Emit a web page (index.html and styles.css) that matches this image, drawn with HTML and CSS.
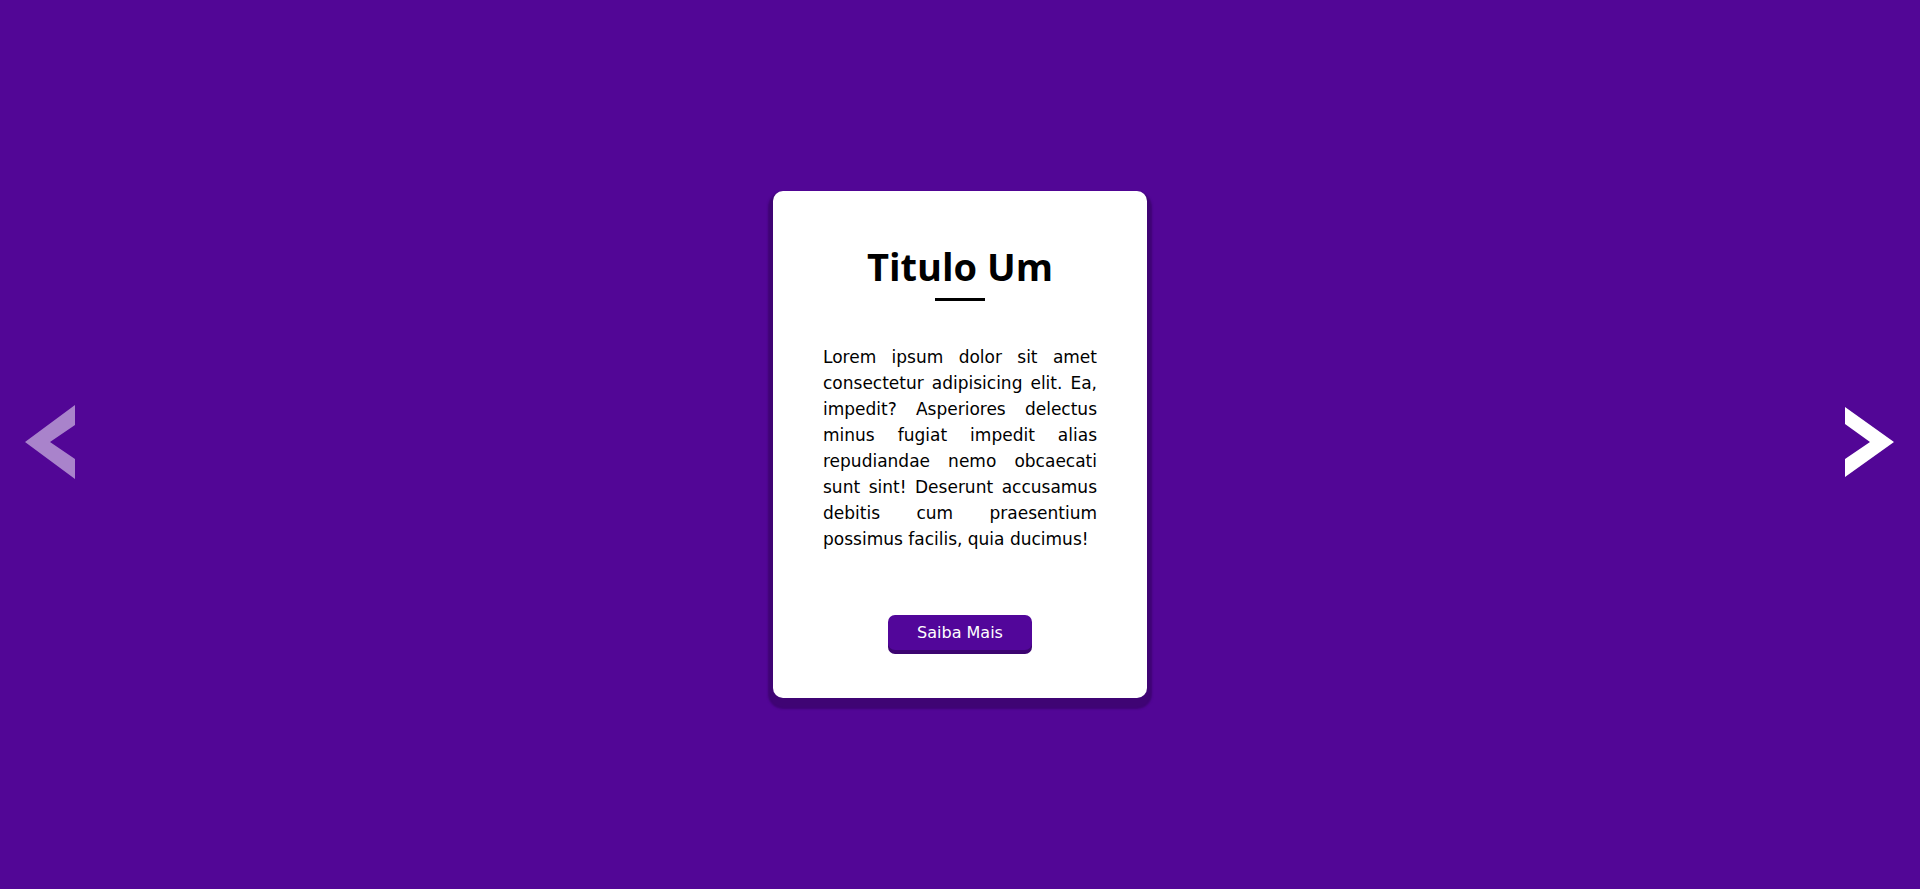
FILE: index.html
```html
<!DOCTYPE html>
<html lang="pt-BR">
<head>
<meta charset="utf-8">
<title>Card</title>
<link rel="stylesheet" href="styles.css">
</head>
<body>
<main class="slider">
  <button class="arrow arrow-prev" aria-label="Anterior">
    <svg width="50" height="74" viewBox="0 0 50 74"><polygon points="50,0 0,37 50,74 50,54 25,37 50,20" fill="currentColor"/></svg>
  </button>
  <article class="card">
    <h1 class="card-title">Titulo Um</h1>
    <span class="card-rule"></span>
    <p class="card-text">Lorem ipsum dolor sit amet consectetur adipisicing elit. Ea, impedit? Asperiores delectus minus fugiat impedit alias repudiandae nemo obcaecati sunt sint! Deserunt accusamus debitis cum praesentium possimus facilis, quia ducimus!</p>
    <a class="card-btn" href="#">Saiba Mais</a>
  </article>
  <button class="arrow arrow-next" aria-label="Próximo">
    <svg width="50" height="70" viewBox="0 0 50 70"><polygon points="0,0 49,35 0,70 0,52 25,35 0,17" fill="currentColor"/></svg>
  </button>
</main>
</body>
</html>
```

FILE: styles.css
```css
* { box-sizing: border-box; }

html, body {
  margin: 0;
  height: 100%;
}

body {
  background: #520696;
  font-family: "DejaVu Sans", "Open Sans", sans-serif;
}

.slider {
  height: 100%;
  display: flex;
  align-items: center;
  justify-content: space-between;
  padding: 0 25px 0 25px;
}

.arrow {
  background: none;
  border: 0;
  padding: 0;
  width: 50px;
  display: flex;
  align-items: center;
  justify-content: center;
  cursor: pointer;
  margin-top: -6px;
}

.arrow-prev { color: rgba(255, 255, 255, 0.5); }
.arrow-next { color: #ffffff; }

.card {
  width: 374px;
  height: 507px;
  background: #ffffff;
  border-radius: 10px;
  padding: 52px 50px 48px;
  display: flex;
  flex-direction: column;
  align-items: center;
  box-shadow: 0 6px 2px 5px #3f0474;
}

.card-title {
  margin: 0;
  font-family: "Open Sans", "DejaVu Sans", sans-serif;
  font-size: 38px;
  line-height: 46px;
  font-weight: 700;
  color: #000;
}

.card-rule {
  display: block;
  width: 50px;
  height: 3px;
  background: #000;
  margin-top: 9px;
}

.card-text {
  margin: 43px 0 0;
  width: 274px;
  font-size: 17px;
  line-height: 26px;
  text-align: justify;
  color: #000;
}

.card-btn {
  margin-top: auto;
  width: 144px;
  height: 35px;
  line-height: 35px;
  text-align: center;
  background: #52069a;
  color: #fff;
  text-decoration: none;
  font-size: 16px;
  border-radius: 7px;
  box-shadow: 0 4px 0 #3c0470;
}
```
